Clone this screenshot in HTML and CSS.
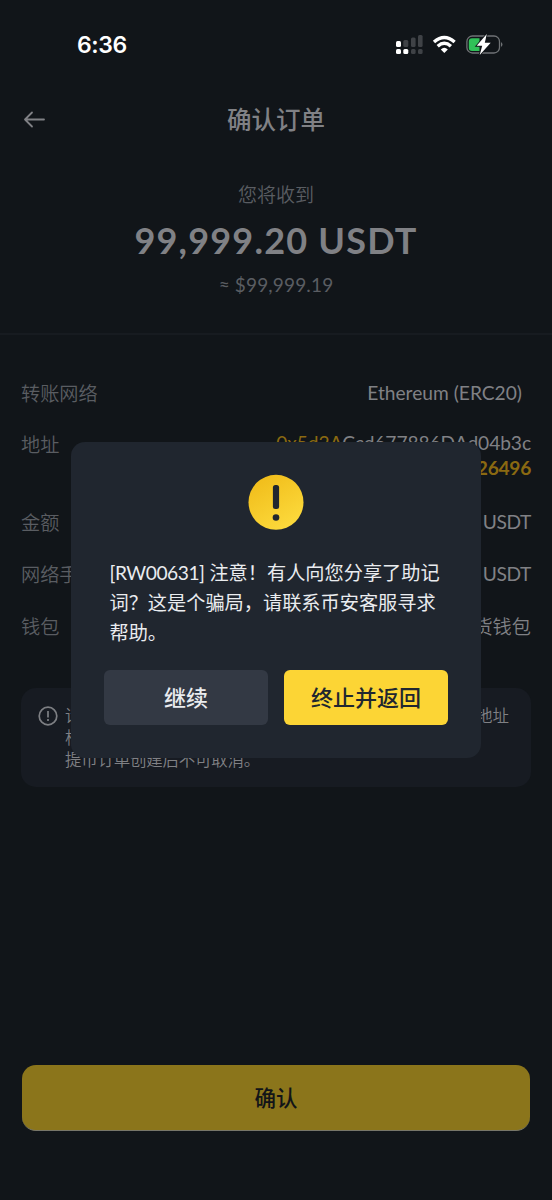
FILE: index.html
```html
<!DOCTYPE html>
<html lang="zh-CN">
<head>
<meta charset="utf-8">
<title>确认订单</title>
<link rel="stylesheet" href="styles.css">
</head>
<body>
<div class="screen">
  <div class="status">
    <span class="clock">6:36</span>
    <svg class="status-icons" width="112" height="24" viewBox="0 0 112 24">
      <g fill="#fff"><rect x="1" y="9" width="5" height="6" rx="1.5"/><rect x="1" y="17" width="5" height="5" rx="1.5"/><rect x="8.3" y="17" width="5" height="5" rx="1.5"/></g>
      <g fill="#3f4246"><rect x="8.3" y="8" width="5" height="7" rx="1.5"/><rect x="16" y="5.500" width="4.600" height="9.500" rx="1.500"/><rect x="23" y="3" width="4.600" height="12" rx="1.500"/><rect x="16" y="17" width="4.600" height="5" rx="1.500"/><rect x="23" y="17" width="4.600" height="5" rx="1.500"/></g>
      <g fill="none" stroke="#fff" stroke-width="3.400"><path d="M39 10Q49.300 .8 59.600 10"/><path d="M42.700 14.200Q49.300 8.300 55.900 14.200"/></g>
      <path d="M45.800 17.400Q49.300 14.200 52.800 17.400L49.300 21Z" fill="#fff"/>
      <rect x="71.900" y="4" width="32.600" height="17" rx="5.500" fill="none" stroke="#6f7275" stroke-width="1.300"/>
      <path d="M77 6.200H84.500V19H77Q73.800 19 73.800 15.800V9.400Q73.800 6.200 77 6.200Z" fill="#30c058"/>
      <path d="M106 10Q109 12.500 106 15Z" fill="#6f7275"/>
      <path d="M91.800 2L81.700 13.800H87.200L84.700 23L95.700 10.700H89.800Z" fill="#fff" stroke="#111519" stroke-width="1.800" paint-order="stroke"/>
    </svg>
  </div>
  <div class="nav">
    <svg width="24" height="20" viewBox="0 0 24 20" fill="none" stroke="#808185" stroke-width="1.800" stroke-linecap="round" stroke-linejoin="round"><path d="M22 9.500H3M10 2.500L3 9.500L10 16.500"/></svg>
    <h1 class="title">确认订单</h1>
  </div>
  <div class="summary">
    <div class="hint">您将收到</div>
    <div class="amount">99,999.20 USDT</div>
    <div class="fiat">≈ $99,999.19</div>
  </div>
  <div class="details">
    <div class="row"><span class="label">转账网络</span><span class="value network">Ethereum (ERC20)</span></div>
    <div class="row address"><span class="label">地址</span><span class="value"><span class="gold">0x5d2A</span>Ccd677886DAd04b3c<br><b class="gold">26496</b></span></div>
    <div class="row"><span class="label">金额</span><span class="value unit">USDT</span></div>
    <div class="row"><span class="label">网络手续费</span><span class="value unit">USDT</span></div>
    <div class="row"><span class="label">钱包</span><span class="value wallet">现货钱包</span></div>
  </div>
  <div class="notice">
    <svg width="20" height="20" viewBox="0 0 20 20" fill="none" stroke="#7d7f83" stroke-width="1.700"><circle cx="10" cy="10" r="8.800"/><path d="M10 5V11.500M10 13V15"/></svg>
    <div class="notice-text"><div class="notice-line"><span>请确保</span><span>地址</span></div><div>根据</div><div class="notice-end">提币订单创建后不可取消。</div></div>
  </div>
  <button class="confirm">确认</button>
  <div class="dialog">
    <svg class="alert" width="56" height="56" viewBox="0 0 56 56">
      <defs><linearGradient id="sun" x1="0" y1="0" x2=".6" y2="1"><stop offset="0" stop-color="#efb916"/><stop offset="1" stop-color="#fcd93b"/></linearGradient></defs>
      <circle cx="28" cy="28.300" r="27.500" fill="url(#sun)"/><rect x="24.900" y="11" width="6.200" height="24" rx="2.500" fill="#20262f"/><circle cx="28" cy="43.500" r="3.300" fill="#20262f"/>
    </svg>
    <p class="message"><span class="code">[RW00631]</span> 注意！有人向您分享了助记<br>词？这是个骗局，请联系币安客服寻求<br>帮助。</p>
    <div class="actions"><button class="btn">继续</button><button class="btn primary">终止并返回</button></div>
  </div>
</div>
</body>
</html>
```
FILE: styles.css
```css
* { box-sizing: border-box; }
body { margin: 0; background: #111519; font-family: Lato, "Noto Sans CJK SC", sans-serif; }
.screen { position: relative; width: 552px; height: 1200px; display: flex; flex-direction: column; overflow: hidden; }
.status { height: 90px; padding: 32px 45px 0 77px; display: flex; justify-content: space-between; align-items: flex-start; }
.clock { color: #fff; font: 600 23px/26px Inter, sans-serif; letter-spacing: -.4px; }
.status-icons { display: block; }
.nav { height: 60px; display: grid; grid-template-columns: 24px 1fr 24px; align-items: center; padding: 0 22px; }
.title { margin: 0; text-align: center; color: #808185; font-size: 24.500px; line-height: 36px; font-weight: 500; }
.summary { height: 185px; padding-top: 31px; text-align: center; border-bottom: 2px solid #171b20; color: #5a5d62; font-size: 19px; }
.hint { line-height: 28px; font-weight: 350; }
.amount { margin-top: 8px; color: #808185; font-size: 36px; line-height: 46px; font-weight: 700; letter-spacing: 1.200px; }
.fiat { margin-top: 8px; line-height: 28px; letter-spacing: .15px; }
.details { padding: 33px 21px 0; }
.row { height: 52px; display: flex; justify-content: space-between; align-items: center; font-size: 19.200px; line-height: 26px; white-space: nowrap; }
.label { color: #5a5d62; font-weight: 350; }
.value { color: #808185; text-align: right; }
.network { padding-right: 9px; margin-bottom: 2px; }
.unit { letter-spacing: -.4px; margin-bottom: 2px; }
.wallet { font-weight: 350; }
.address { height: 77px; align-items: flex-start; padding-top: 12px; }
.address .value { line-height: 25px; margin-top: -2px; letter-spacing: -.08px; }
.address b { letter-spacing: -.3px; }
.gold { color: #8a6911; }
.notice { height: 99px; margin: 35px 21px 0; padding: 18px 22px 0 17px; display: flex; gap: 7px; border-radius: 15px; background: #171b22; color: #808185; }
.notice-text { flex: 1; margin-top: -1px; font-size: 16.500px; line-height: 22px; font-weight: 350; }
.notice-line { display: flex; justify-content: space-between; }
.notice-end { letter-spacing: -.25px; }
button { border: 0; padding: 0; font-family: inherit; }
.confirm { height: 66px; margin: 278px 22px 0; padding-bottom: 2px; border-radius: 14px; background: #8b751b; border-bottom: 1px solid #777669; color: #121418; font-size: 21.500px; font-weight: 500; }
.dialog { position: absolute; left: 71px; top: 442px; width: 410px; height: 316px; padding: 32px 33px 0; border-radius: 14px; background: #20262f; }
.alert { display: block; margin: 0 auto; }
.message { margin: 28px 0 0 5.500px; color: #eaecef; font-size: 19.200px; line-height: 30px; white-space: nowrap; }
.code { letter-spacing: -.45px; }
.actions { margin-top: 22px; display: flex; gap: 16px; }
.btn { flex: 1; height: 55px; padding-bottom: 4px; border-radius: 6px; background: #333944; color: #eaecef; font-size: 22px; font-weight: 500; }
.primary { background: #fcd535; color: #202630; }
```
